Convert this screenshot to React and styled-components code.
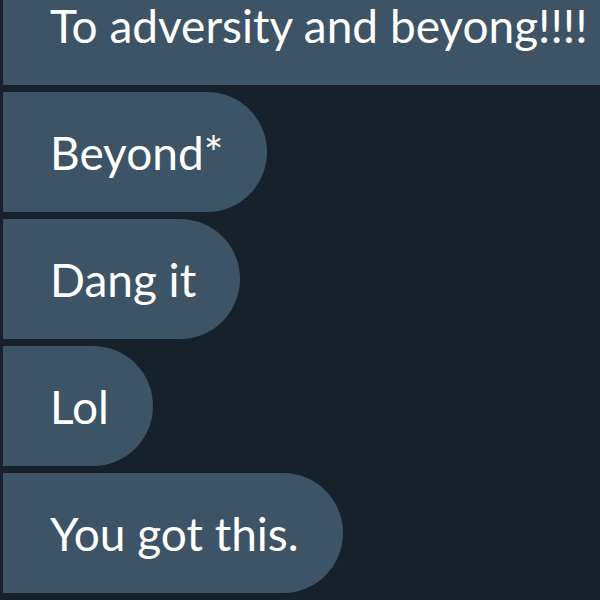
import styled, { createGlobalStyle } from 'styled-components';

const GlobalStyle = createGlobalStyle`
  html, body {
    margin: 0;
    padding: 0;
    background: #17212c;
    overflow: hidden;
  }
`;

const Thread = styled.div`
  display: flex;
  flex-direction: column;
  align-items: flex-start;
  gap: 7px;
  width: 600px;
  padding-left: 3px;
  box-sizing: border-box;
  margin-top: -35px;
`;

const Bubble = styled.div`
  display: flex;
  align-items: center;
  width: max-content;
  height: 120px;
  padding: 0 44px 0 47px;
  box-sizing: border-box;
  background: #3d5466;
  border-radius: ${(p) => (p.$first ? '0' : '0 60px 60px 0')};
  color: #ffffff;
  font-family: 'Lato', 'Open Sans', sans-serif;
  font-size: 46px;
  white-space: nowrap;
  flex-shrink: 0;
`;

const messages = ['Beyond*', 'Dang it', 'Lol', 'You got this.'];

const App = () => {
  return (
    <>
      <GlobalStyle />
      <Thread>
        <Bubble $first>To adversity and beyong!!!!</Bubble>
        {messages.map((m) => (
          <Bubble key={m}>{m}</Bubble>
        ))}
      </Thread>
    </>
  );
};

export default App;
